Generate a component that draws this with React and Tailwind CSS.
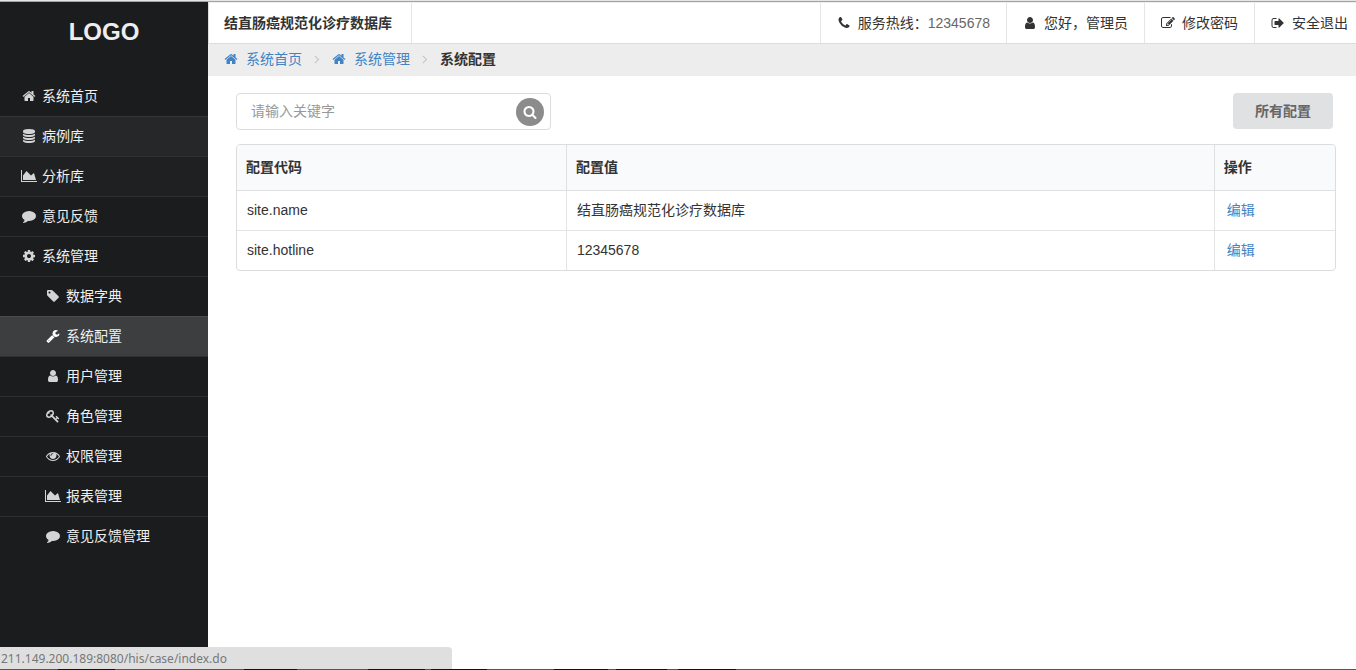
import React from 'react';

const ICONS = {
  home: 'M1472 992v480q0 26-19 45t-45 19h-384v-384h-256v384h-384q-26 0-45-19t-19-45v-480q0-1 .5-3t.5-3l575-474 575 474q1 2 1 6zm223-69l-62 74q-8 9-21 11h-3q-13 0-21-7l-692-577-692 577q-12 8-24 7-13-2-21-11l-62-74q-8-10-7-23.5t11-21.5l719-599q32-26 76-26t76 26l244 204v-195q0-14 9-23t23-9h192q14 0 23 9t9 23v408l219 182q10 8 11 21.5t-7 23.5z',
  database: 'M896 768q237 0 443-43t325-127v170q0 69-103 128t-280 93.5-385 34.5-385-34.5-280-93.5-103-128v-170q119 84 325 127t443 43zm0 768q237 0 443-43t325-127v170q0 69-103 128t-280 93.5-385 34.5-385-34.5-280-93.5-103-128v-170q119 84 325 127t443 43zm0-384q237 0 443-43t325-127v170q0 69-103 128t-280 93.5-385 34.5-385-34.5-280-93.5-103-128v-170q119 84 325 127t443 43zm0-1152q208 0 385 34.5t280 93.5 103 128v128q0 69-103 128t-280 93.5-385 34.5-385-34.5-280-93.5-103-128v-128q0-69 103-128t280-93.5 385-34.5z',
  chart: 'M2048 1536v128h-2048v-1536h128v1408h1920zm-384-1024l256 896h-1664v-576l448-576 576 576z',
  comment: 'M1792 896q0 174-120 321.5t-326 233-450 85.5q-70 0-145-8-198 175-460 242-49 14-114 22-17 2-30.5-9t-17.5-29v-1q-3-4-.5-12t2-10 4.5-9.5l6-9 7-8.5 8-9q7-8 31-34.5t34.5-38 31-39.5 32.5-51 27-59 26-76q-157-89-247.5-220t-90.5-281q0-130 71-248.5t191-204.5 286-136.5 348-50.5q244 0 450 85.5t326 233 120 321.5z',
  cog: 'M1152 896q0-106-75-181t-181-75-181 75-75 181 75 181 181 75 181-75 75-181zm512-109v222q0 12-8 23t-20 13l-185 28q-19 54-39 91 35 50 107 138 10 12 10 25t-9 23q-27 37-99 108t-94 71q-12 0-26-9l-138-108q-44 23-91 38-16 136-29 186-7 28-36 28h-222q-14 0-24.5-8.5t-11.5-21.5l-28-184q-49-16-90-37l-141 107q-10 9-25 9-14 0-25-11-126-114-165-168-7-10-7-23 0-12 8-23 15-21 51-66.5t54-70.5q-27-50-41-99l-183-27q-13-2-21-12.5t-8-23.5v-222q0-12 8-23t19-13l186-28q14-46 39-92-40-57-107-138-10-12-10-24 0-10 9-23 26-36 98.5-107.5t94.5-71.5q13 0 26 10l138 107q44-23 91-38 16-136 29-186 7-28 36-28h222q14 0 24.5 8.5t11.5 21.5l28 184q49 16 90 37l142-107q9-9 24-9 13 0 25 10 129 119 165 170 7 8 7 22 0 12-8 23-15 21-51 66.5t-54 70.5q26 50 41 98l183 28q13 2 21 12.5t8 23.5z',
  tag: 'M576 448q0-53-37.5-90.5t-90.5-37.5-90.5 37.5-37.5 90.5 37.5 90.5 90.5 37.5 90.5-37.5 37.5-90.5zm1067 576q0 53-37 90l-491 492q-39 37-91 37-53 0-90-37l-715-716q-38-37-64.5-101t-26.5-117v-416q0-52 38-90t90-38h416q53 0 117 26.5t102 64.5l715 714q37 39 37 91z',
  wrench: 'M448 1472q0-26-19-45t-45-19-45 19-19 45 19 45 45 19 45-19 19-45zm644-420l-682 682q-37 37-90 37-52 0-91-37l-106-108q-38-36-38-90 0-53 38-91l681-681q39 98 114.5 173.5t173.5 114.5zm634-435q0 39-23 106-47 134-164.5 217.5t-258.5 83.5q-185 0-316.5-131.5t-131.5-316.5 131.5-316.5 316.5-131.5q58 0 121.5 16.5t107.5 46.5q16 11 16 28t-16 28l-293 169v224l193 107q5-3 79-48.5t135.5-81 70.5-35.5q15 0 23.5 10t8.5 25z',
  user: 'M1536 1399q0 109-62.5 187t-150.5 78h-854q-88 0-150.5-78t-62.5-187q0-85 8.5-160.5t31.5-152 58.5-131 94-89 134.5-34.5q131 128 313 128t313-128q76 0 134.5 34.5t94 89 58.5 131 31.5 152 8.5 160.5zm-256-887q0 159-112.5 271.5t-271.5 112.5-271.5-112.5-112.5-271.5 112.5-271.5 271.5-112.5 271.5 112.5 112.5 271.5z',
  key: 'M832 512q0-80-56-136t-136-56-136 56-56 136q0 42 19 83-41-19-83-19-80 0-136 56t-56 136 56 136 136 56 136-56 56-136q0-42-19-83 41 19 83 19 80 0 136-56t56-136zm851 704q0 17-49 66t-66 49q-9 0-28.5-16t-36.5-33-38.5-40-24.5-26l-96 96 220 220q28 28 28 68 0 42-39 81t-81 39q-40 0-68-28l-671-671q-176 131-365 131-163 0-265.5-102.5t-102.5-265.5q0-160 95-313t248-248 313-95q163 0 265.5 102.5t102.5 265.5q0 189-131 365l355 355 96-96q-3-3-26-24.5t-40-38.5-33-36.5-16-28.5q0-17 49-66t66-49q13 0 23 10 6 6 46 44.5t82 79.5 86.5 86 73 78 28.5 41z',
  eye: 'M1664 960q-152-236-381-353 61 104 61 225 0 185-131.5 316.5t-316.5 131.5-316.5-131.5-131.5-316.5q0-121 61-225-229 117-381 353 133 205 333.5 326.5t434.5 121.5 434.5-121.5 333.5-326.5zm-720-384q0-20-14-34t-34-14q-125 0-214.5 89.5t-89.5 214.5q0 20 14 34t34 14 34-14 14-34q0-86 61-147t147-61q20 0 34-14t14-34zm848 384q0 34-20 69-140 230-376.5 368.5t-499.5 138.5-499.5-139-376.5-368q-20-35-20-69t20-69q140-229 376.5-368t499.5-139 499.5 139 376.5 368q20 35 20 69z',
  phone: 'M1600 1240q0 27-10 70.5t-21 68.5q-21 50-122 106-94 51-186 51-27 0-53-3.5t-57.5-12.5-47-14.5-55.5-20.5-49-18q-98-35-175-83-127-79-264-216t-216-264q-48-77-83-175-3-9-18-49t-20.5-55.5-14.5-47-12.5-57.5-3.5-53q0-92 51-186 56-101 106-122 25-11 68.5-21t70.5-10q14 0 21 3 18 6 53 76 11 19 30 54t35 63.5 31 53.5q3 4 17.5 25t21.5 35.5 7 28.5q0 20-28.5 50t-62 55-62 53-28.5 46q0 9 5 22.5t8.5 20.5 14 24 11.5 19q76 137 174 235t235 174q2 1 19 11.5t24 14 20.5 8.5 22.5 5q18 0 46-28.5t53-62 55-62 50-28.5q14 0 28.5 7t35.5 21.5 25 17.5q25 15 53.5 31t63.5 35 54 30q70 35 76 53 3 7 3 21z',
  edit: 'M888 1184l116-116-152-152-116 116v56h96v96h56zm440-720q-16-16-33 1l-350 350q-17 17-1 33t33-1l350-350q17-17 1-33zm80 594v190q0 119-84.5 203.5t-203.5 84.5h-832q-119 0-203.5-84.5t-84.5-203.5v-832q0-119 84.5-203.5t203.5-84.5h832q63 0 117 25 15 7 18 23 3 17-9 29l-49 49q-14 14-32 8-23-6-45-6h-832q-66 0-113 47t-47 113v832q0 66 47 113t113 47h832q66 0 113-47t47-113v-126q0-13 9-22l64-64q15-15 35-7t20 29zm-96-738l288 288-672 672h-288v-288zm444 132l-92 92-288-288 92-92q28-28 68-28t68 28l152 152q28 28 28 68t-28 68z',
  signOut: 'M704 1440q0 4 1 20t.5 26.5-3 23.5-10 19.5-20.5 6.5h-320q-119 0-203.5-84.5t-84.5-203.5v-704q0-119 84.5-203.5t203.5-84.5h320q13 0 22.5 9.5t9.5 22.5q0 4 1 20t.5 26.5-3 23.5-10 19.5-20.5 6.5h-320q-66 0-113 47t-47 113v704q0 66 47 113t113 47h312l11.5 1 11.5 3 8 5.5 7 9 2 13.5zm928-544q0 26-19 45l-544 544q-19 19-45 19t-45-19-19-45v-288h-448q-26 0-45-19t-19-45v-384q0-26 19-45t45-19h448v-288q0-26 19-45t45-19 45 19l544 544q19 19 19 45z',
  angle: 'M1171 960q0 13-10 23l-466 466q-10 10-23 10t-23-10l-50-50q-10-10-10-23t10-23l393-393-393-393q-10-10-10-23t10-23l50-50q10-10 23-10t23 10l466 466q10 10 10 23z',
  search: 'M1216 832q0-185-131.5-316.5t-316.5-131.5-316.5 131.5-131.5 316.5 131.5 316.5 316.5 131.5 316.5-131.5 131.5-316.5zm512 832q0 52-38 90t-90 38q-54 0-90-38l-343-342q-179 124-399 124-143 0-273.5-55.5t-225-150-150-225-55.5-273.5 55.5-273.5 150-225 225-150 273.5-55.5 273.5 55.5 225 150 150 225 55.5 273.5q0 220-124 399l343 343q37 37 37 90z',
};

function Icon({ name, className = '' }) {
  const wide = name === 'chart';
  return (
    <svg
      aria-hidden="true"
      viewBox={wide ? '0 0 2048 1792' : '0 0 1792 1792'}
      className={`${wide ? 'h-[14px] w-4' : 'size-[14px]'} shrink-0 fill-current ${className}`}
    >
      <path d={ICONS[name]} />
    </svg>
  );
}

const MAIN = [
  { icon: 'home', label: '系统首页', tone: 'border-[#343537]' },
  { icon: 'database', label: '病例库', tone: 'border-[#303133] bg-[#262729]' },
  { icon: 'chart', label: '分析库', tone: 'border-[#2d2e30] bg-[#1f2022]' },
  { icon: 'comment', label: '意见反馈', tone: 'border-[#2d2e30]' },
  { icon: 'cog', label: '系统管理', tone: 'border-[#2d2e30]' },
];

const SUB = [
  { icon: 'tag', label: '数据字典', tone: 'border-[#4a4b4c] text-[#d4d4d4]' },
  { icon: 'wrench', label: '系统配置', tone: 'border-[#303133] bg-[#3d3e3f] text-white' },
  { icon: 'user', label: '用户管理', tone: 'border-[#2d2e30] text-[#d4d4d4]' },
  { icon: 'key', label: '角色管理', tone: 'border-[#2d2e30] text-[#d4d4d4]' },
  { icon: 'eye', label: '权限管理', tone: 'border-[#2d2e30] text-[#d4d4d4]' },
  { icon: 'chart', label: '报表管理', tone: 'border-[#2d2e30] text-[#d4d4d4]' },
  { icon: 'comment', label: '意见反馈管理', tone: 'border-transparent text-[#d4d4d4]' },
];

const ACTIONS = [
  { icon: 'user', label: '您好，管理员', pad: 'pr-4' },
  { icon: 'edit', label: '修改密码', pad: 'pr-4' },
  { icon: 'signOut', label: '安全退出', pad: 'pr-2' },
];

const ROWS = [
  ['site.name', '结直肠癌规范化诊疗数据库'],
  ['site.hotline', '12345678'],
];

const TASKBAR = [
  [58, 0], [57, 1], [129, 0], [53, 1], [71, 0], [57, 1], [6, 0], [56, 1],
  [67, 0], [54, 1], [8, 0], [51, 1], [11, 0], [58, 1], [620, 0],
];

function NavLink({ item, indent, tone }) {
  return (
    <li>
      <a href="#" className={`flex h-10 items-center gap-1 border-b pb-0.5 ${indent} ${tone}`}>
        <span className="flex w-[18px] justify-center">
          <Icon name={item.icon} />
        </span>
        <span className="text-[#f0f0f0]">{item.label}</span>
      </a>
    </li>
  );
}

function Crumb({ label }) {
  return (
    <li className="flex items-center">
      <a href="#" className="flex items-center gap-2 text-[#4183c4]">
        <Icon name="home" />
        {label}
      </a>
      <Icon name="angle" className="mx-2 text-[#c4c4c4]" />
    </li>
  );
}

export default function App() {
  return (
    <div className="flex min-h-screen flex-col bg-white font-['Liberation_Sans','Noto_Sans_CJK_SC',sans-serif] text-sm text-[#333333]">
      <div className="h-0.5 border-b border-[#a3a5a4] bg-[#e4e6e5]" />
      <div className="flex grow">
        <nav aria-label="主导航" className="w-52 shrink-0 bg-[#1b1c1e] text-[#d4d4d4]">
          <div className="flex h-[75px] justify-center pt-[14px] text-2xl font-bold text-[#eeeeee]">
            <span>LOGO</span>
          </div>
          <ul>
            {MAIN.map((item) => (
              <NavLink key={item.label} item={item} indent="pl-5" tone={item.tone} />
            ))}
            {SUB.map((item) => (
              <NavLink key={item.label} item={item} indent="pl-11" tone={item.tone} />
            ))}
          </ul>
        </nav>

        <div className="min-w-0 grow">
          <header className="flex h-[42px] items-stretch border-t border-b border-l border-[#dddddd] border-t-[#eeeeee]">
            <h1 className="flex items-center border-r border-[#e5e5e5] pr-[19px] pl-[15px] text-sm font-bold">
              结直肠癌规范化诊疗数据库
            </h1>
            <div className="ml-auto flex items-stretch">
              <p className="flex items-center gap-[7px] border-l border-[#e5e5e5] px-4">
                <Icon name="phone" />
                <span>
                  服务热线：<span className="text-[#666666]">12345678</span>
                </span>
              </p>
              {ACTIONS.map((a) => (
                <a
                  key={a.label}
                  href="#"
                  className={`flex items-center gap-[7px] border-l border-[#e5e5e5] pl-4 ${a.pad}`}
                >
                  <Icon name={a.icon} />
                  {a.label}
                </a>
              ))}
            </div>
          </header>

          <ol aria-label="面包屑" className="flex h-8 items-center bg-[#ededed] pb-0.5 pl-4">
            <Crumb label="系统首页" />
            <Crumb label="系统管理" />
            <li className="font-bold">系统配置</li>
          </ol>

          <main className="pt-[17px] pr-5 pl-7">
            <div className="mb-[14px] flex items-start justify-between pr-[3px]">
              <form
                className="flex h-[37px] w-[315px] items-center rounded border border-[#dddddd] pr-1.5"
                onSubmit={(e) => e.preventDefault()}
              >
                <input
                  type="text"
                  aria-label="关键字"
                  placeholder="请输入关键字"
                  className="h-full min-w-0 grow bg-transparent pb-0.5 pl-[14px] outline-none placeholder:text-[#999999]"
                />
                <button
                  type="submit"
                  aria-label="搜索"
                  className="flex size-7 items-center justify-center rounded-full bg-[#8c8c8c] text-white"
                >
                  <Icon name="search" />
                </button>
              </form>
              <button
                type="button"
                className="h-9 w-25 rounded bg-[#e0e1e2] font-bold text-[#666666]"
              >
                所有配置
              </button>
            </div>

            <div className="overflow-hidden rounded border border-[#dcdddd]">
              <table className="w-full table-fixed border-collapse text-left">
                <colgroup>
                  <col className="w-[30%]" />
                  <col className="w-[59%]" />
                  <col className="w-[11%]" />
                </colgroup>
                <thead>
                  <tr className="h-[45px] border-b border-[#dfe0e1] bg-[#f9fafb]">
                    <th className="pl-[9px] font-bold">配置代码</th>
                    <th className="border-l border-[#dfe0e1] pl-[9px] font-bold">配置值</th>
                    <th className="border-l border-[#dfe0e1] pl-[9px] font-bold">操作</th>
                  </tr>
                </thead>
                <tbody>
                  {ROWS.map(([code, value]) => (
                    <tr key={code} className="h-10 border-b border-[#e5e5e5] last:border-b-0">
                      <td className="pl-[10px]">{code}</td>
                      <td className="border-l border-[#e5e5e5] pl-[10px]">{value}</td>
                      <td className="border-l border-[#e5e5e5] pl-3">
                        <a href="#" className="text-[#4183c4]">编辑</a>
                      </td>
                    </tr>
                  ))}
                </tbody>
              </table>
            </div>
          </main>
        </div>
      </div>

      <div className="fixed inset-x-0 bottom-0">
        <div className="h-[22px] w-[452px] rounded-tr bg-[#dfdfdf] pt-px pl-px font-['Noto_Sans',sans-serif] text-xs leading-[22px] text-[#777777]">
          211.149.200.189:8080/his/case/index.do
        </div>
        <div className="flex h-px">
          {TASKBAR.map(([size, dark], i) => (
            <div
              key={i}
              className={dark ? 'bg-[#111111]' : 'bg-[#555555]'}
              style={{ flexGrow: size }}
            />
          ))}
        </div>
      </div>
    </div>
  );
}
